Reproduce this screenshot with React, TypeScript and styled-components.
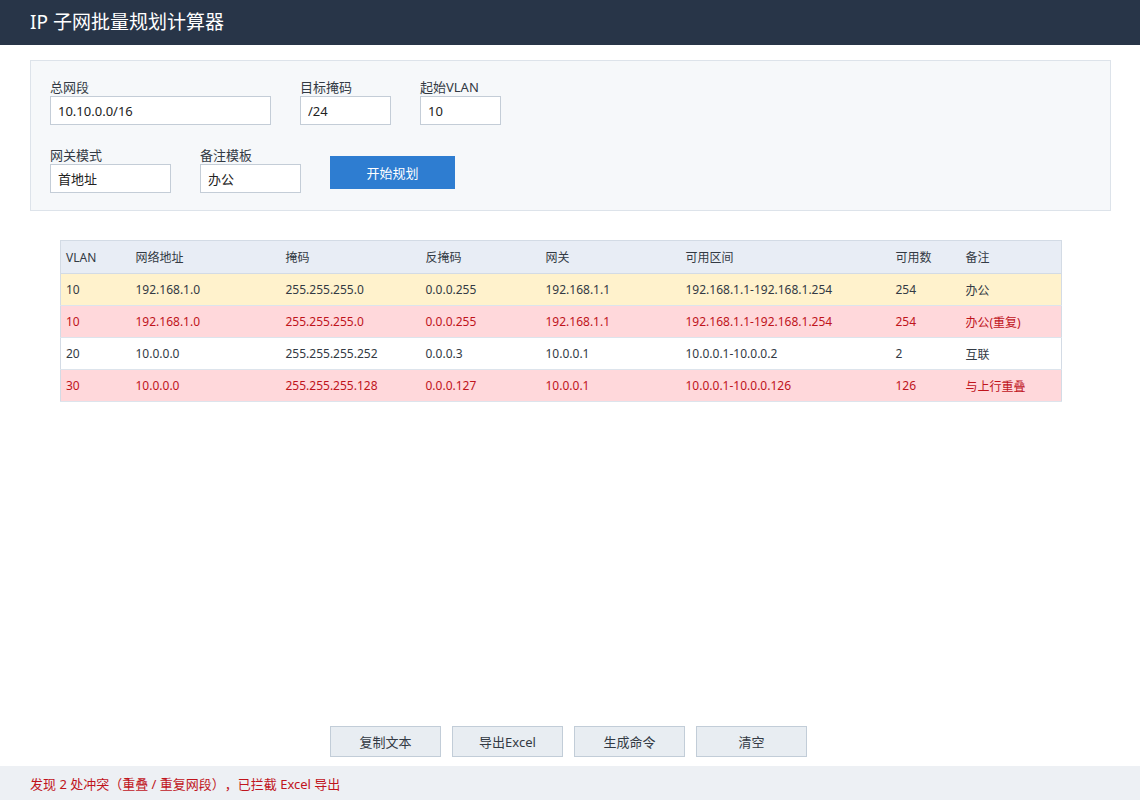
import { FC } from 'react';
import styled, { createGlobalStyle } from 'styled-components';

type Tone = 'normal' | 'warn' | 'error';

interface SubnetRow {
  vlan: string;
  network: string;
  mask: string;
  wildcard: string;
  gateway: string;
  range: string;
  count: string;
  note: string;
  tone: Tone;
}

const rows: SubnetRow[] = [
  {
    vlan: '10',
    network: '192.168.1.0',
    mask: '255.255.255.0',
    wildcard: '0.0.0.255',
    gateway: '192.168.1.1',
    range: '192.168.1.1-192.168.1.254',
    count: '254',
    note: '办公',
    tone: 'warn',
  },
  {
    vlan: '10',
    network: '192.168.1.0',
    mask: '255.255.255.0',
    wildcard: '0.0.0.255',
    gateway: '192.168.1.1',
    range: '192.168.1.1-192.168.1.254',
    count: '254',
    note: '办公(重复)',
    tone: 'error',
  },
  {
    vlan: '20',
    network: '10.0.0.0',
    mask: '255.255.255.252',
    wildcard: '0.0.0.3',
    gateway: '10.0.0.1',
    range: '10.0.0.1-10.0.0.2',
    count: '2',
    note: '互联',
    tone: 'normal',
  },
  {
    vlan: '30',
    network: '10.0.0.0',
    mask: '255.255.255.128',
    wildcard: '0.0.0.127',
    gateway: '10.0.0.1',
    range: '10.0.0.1-10.0.0.126',
    count: '126',
    note: '与上行重叠',
    tone: 'error',
  },
];

const columns = ['VLAN', '网络地址', '掩码', '反掩码', '网关', '可用区间', '可用数', '备注'];
const colWidths = [70, 150, 140, 120, 140, 210, 70, 101];

const App: FC = () => {
  return (
    <Page>
      <GlobalStyle />
      <Header>IP 子网批量规划计算器</Header>
      <FormPanel>
        <FormRow>
          <Field>
            <Label>总网段</Label>
            <Input width={221} defaultValue="10.10.0.0/16" />
          </Field>
          <Field>
            <Label>目标掩码</Label>
            <Input width={91} defaultValue="/24" />
          </Field>
          <Field>
            <Label>起始VLAN</Label>
            <Input width={81} defaultValue="10" />
          </Field>
        </FormRow>
        <FormRow>
          <Field>
            <Label>网关模式</Label>
            <Input width={121} defaultValue="首地址" />
          </Field>
          <Field>
            <Label>备注模板</Label>
            <Input width={101} defaultValue="办公" />
          </Field>
          <PrimaryButton>开始规划</PrimaryButton>
        </FormRow>
      </FormPanel>

      <TableWrap>
        <Table>
          <colgroup>
            {colWidths.map((w, i) => (
              <col key={i} style={{ width: w }} />
            ))}
          </colgroup>
          <thead>
            <tr>
              {columns.map(c => (
                <HeadCell key={c}>{c}</HeadCell>
              ))}
            </tr>
          </thead>
          <tbody>
            {rows.map((r, index) => (
              <Row key={index} tone={r.tone}>
                <Cell>{r.vlan}</Cell>
                <Cell>{r.network}</Cell>
                <Cell>{r.mask}</Cell>
                <Cell>{r.wildcard}</Cell>
                <Cell>{r.gateway}</Cell>
                <Cell>{r.range}</Cell>
                <Cell>{r.count}</Cell>
                <Cell>{r.note}</Cell>
              </Row>
            ))}
          </tbody>
        </Table>
      </TableWrap>

      <Spacer />

      <ActionBar>
        <ActionButton>复制文本</ActionButton>
        <ActionButton>导出Excel</ActionButton>
        <ActionButton>生成命令</ActionButton>
        <ActionButton>清空</ActionButton>
      </ActionBar>

      <StatusBar>发现 2 处冲突（重叠 / 重复网段），已拦截 Excel 导出</StatusBar>
    </Page>
  );
};

const GlobalStyle = createGlobalStyle`
  html, body {
    margin: 0;
    padding: 0;
    background: #ffffff;
    font-family: "Noto Sans", "Noto Sans CJK SC", sans-serif;
  }
  * {
    box-sizing: border-box;
  }
`;

const Page = styled.div`
  display: flex;
  flex-direction: column;
  height: 100vh;
  color: #333a44;
`;

const Header = styled.header`
  height: 45px;
  background: #283548;
  color: #ffffff;
  font-size: 19px;
  line-height: 45px;
  padding: 0 30px;
  flex-shrink: 0;
`;

const FormPanel = styled.section`
  margin: 15px 29px 0 30px;
  background: #f6f8fa;
  border: 1px solid #dde3ea;
  padding: 17px 19px 17px 19px;
  display: flex;
  flex-direction: column;
  gap: 21px;
`;

const FormRow = styled.div`
  display: flex;
  flex-direction: row;
  align-items: flex-end;
  gap: 29px;
`;

const Field = styled.div`
  display: flex;
  flex-direction: column;
`;

const Label = styled.label`
  font-size: 13px;
  line-height: 18px;
  color: #333a44;
`;

const Input = styled.input<{ width: number }>`
  width: ${p => p.width}px;
  height: 29px;
  border: 1px solid #c4cdd7;
  background: #ffffff;
  padding: 0 7px;
  font-family: inherit;
  font-size: 13px;
  color: #222;
  outline: none;
`;

const PrimaryButton = styled.button`
  width: 125px;
  height: 33px;
  margin-bottom: 4px;
  border: 0;
  background: #2e7dd1;
  color: #ffffff;
  font-family: inherit;
  font-size: 13px;
`;

const TableWrap = styled.div`
  margin: 29px 0 0 60px;
  width: 1001px;
`;

const Table = styled.table`
  width: 1001px;
  border-collapse: collapse;
  table-layout: fixed;
  font-size: 12px;
  border: 1px solid #d3dbe5;
`;

const HeadCell = styled.th`
  height: 33px;
  padding: 0 5px;
  text-align: left;
  font-weight: normal;
  background: #e8edf5;
  color: #333a44;
  border-bottom: 1px solid #d3dbe5;
`;

const toneBg: Record<Tone, string> = {
  normal: '#ffffff',
  warn: '#fff2cc',
  error: '#ffd8db',
};

const toneColor: Record<Tone, string> = {
  normal: '#333a44',
  warn: '#333a44',
  error: '#c0141c',
};

const Row = styled.tr<{ tone: Tone }>`
  background: ${p => toneBg[p.tone]};
  color: ${p => toneColor[p.tone]};
  border-bottom: 1px solid #dde4ec;
`;

const Cell = styled.td`
  height: 32px;
  padding: 0 5px;
  white-space: nowrap;
`;

const Spacer = styled.div`
  flex: 1;
`;

const ActionBar = styled.div`
  display: flex;
  justify-content: center;
  gap: 11px;
  padding: 0 3px 9px 0;
`;

const ActionButton = styled.button`
  width: 111px;
  height: 31px;
  background: #e8edf2;
  border: 1px solid #c2cdd8;
  color: #333a44;
  font-family: inherit;
  font-size: 13px;
  padding: 0;
`;

const StatusBar = styled.footer`
  height: 34px;
  background: #edf0f4;
  color: #c0141c;
  font-size: 13px;
  line-height: 36px;
  padding: 0 30px;
  flex-shrink: 0;
  text-spacing-trim: space-all;
`;

export default App;
